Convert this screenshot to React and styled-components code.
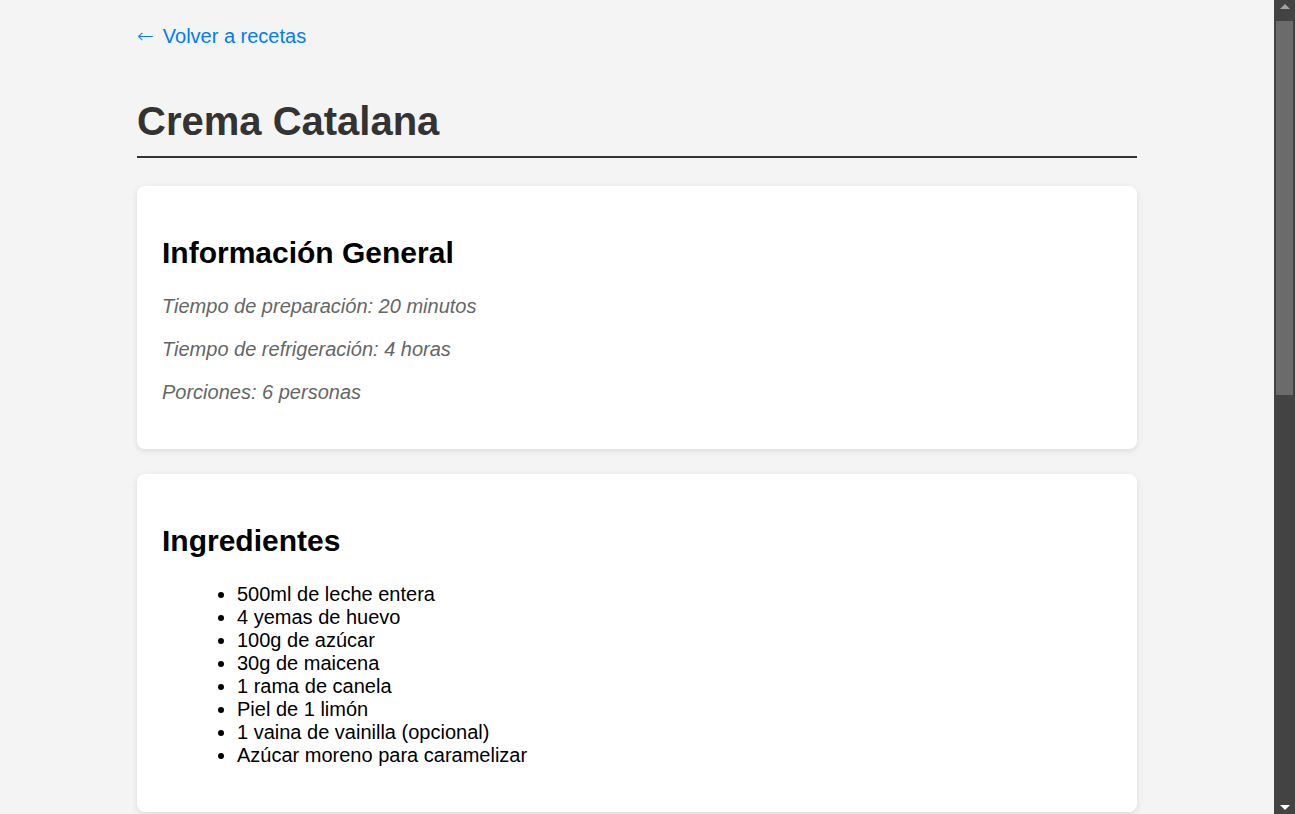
import React from 'react'
import styled, { createGlobalStyle } from 'styled-components'

const GlobalStyle = createGlobalStyle`
    html, body {
        margin: 0;
        padding: 0;
        background: #f4f4f4;
    }

    body {
        font-family: "Liberation Sans", Arial, sans-serif;
        font-size: 20px;
        color: #000;
    }
`;

// content column keeps room for the scrollbar on the right
const Viewport = styled.div`
    padding-right: 21px;
`;

const Page = styled.div`
    max-width: 1000px;
    margin: 0 auto;
    padding: 25px 0;
`;

const ScrollTrack = styled.aside`
    position: fixed;
    top: 0;
    right: 0;
    bottom: 0;
    width: 21px;
    background: #434343;
    display: flex;
    flex-direction: column;
    align-items: center;
`;

const ScrollArrow = styled.div`
    height: 17px;
    width: 100%;
    display: flex;
    align-items: center;
    justify-content: center;

    &::before {
        content: '';
        border-left: 5px solid transparent;
        border-right: 5px solid transparent;
        ${(p) => p.$down
            ? 'border-top: 5px solid #fff; margin-top: 4px;'
            : 'border-bottom: 5px solid #a3a3a3; margin-top: -5px;'}
    }
`;

const ScrollSpace = styled.div`
    flex: 1;
    width: 100%;
    padding: 4px 2px 0 2px;
    box-sizing: border-box;
`;

const ScrollThumb = styled.div`
    height: 374px;
    background: #6b6b6b;
`;

const BackBar = styled.div`
    margin-bottom: 51px;
`;

const BackLink = styled.a`
    color: #007bff;
    text-decoration: none;
    line-height: 23px;
`;

const Arrow = styled.span`
    font-family: "DejaVu Sans", sans-serif;
    font-weight: 300;
    margin-right: 9px;
`;

const Title = styled.h1`
    font-size: 40px;
    font-weight: bold;
    color: #333;
    margin: 0 0 28px;
    padding-bottom: 12px;
    border-bottom: 2px solid #333;
`;

const Card = styled.section`
    background: #fff;
    border-radius: 8px;
    box-shadow: 0 2px 6px rgba(0, 0, 0, 0.1);
    padding: 25px;
    margin-bottom: 25px;

    &:last-child {
        margin-bottom: 0;
    }
`;

const CardTitle = styled.h2`
    font-size: 30px;
    font-weight: bold;
    margin: 25px 0;
`;

const Info = styled.p`
    font-style: italic;
    color: #666;
    margin: 20px 0;
`;

const List = styled.ul`
    margin: 20px 0;
    padding-left: 75px;
`;

const Steps = styled.ol`
    margin: 20px 0;
    padding-left: 75px;
`;

const info = [
    'Tiempo de preparación: 20 minutos',
    'Tiempo de refrigeración: 4 horas',
    'Porciones: 6 personas',
];

const ingredientes = [
    '500ml de leche entera',
    '4 yemas de huevo',
    '100g de azúcar',
    '30g de maicena',
    '1 rama de canela',
    'Piel de 1 limón',
    '1 vaina de vainilla (opcional)',
    'Azúcar moreno para caramelizar',
];

const pasos = [
    'Calentar la leche con la rama de canela y la piel de limón.',
    'Si se usa vainilla, abrir la vaina y añadirla a la leche.',
    'Llevar a ebullición y retirar del fuego.',
    'Dejar infusionar durante 15 minutos.',
    'Colar la leche para retirar la canela, el limón y la vainilla.',
    'En un bol, batir las yemas con el azúcar hasta blanquear.',
    'Disolver la maicena en un poco de leche fría.',
    'Añadir la maicena disuelta a las yemas y mezclar bien.',
    'Verter la leche caliente poco a poco sobre la mezcla, sin dejar de remover.',
    'Volver a poner todo al fuego medio, removiendo constantemente.',
    'Cocinar hasta que espese, sin que llegue a hervir.',
    'Repartir la crema en cazuelitas de barro individuales.',
    'Dejar enfriar y refrigerar al menos 4 horas.',
];

const consejos = [
    'Espolvorear azúcar moreno justo antes de servir.',
    'Caramelizar con un soplete o una pala de hierro caliente.',
    'No dejar de remover para evitar grumos.',
    'Usar leche entera para una textura más cremosa.',
    'La crema se puede preparar con un día de antelación.',
    'No caramelizar hasta el momento de servir.',
    'Se puede aromatizar con un poco de anís.',
    'Servir frío, con la capa de caramelo crujiente.',
];

const App = () => {
    return (
        <>
            <GlobalStyle />
            <Viewport>
                <Page>
                    <BackBar>
                        <BackLink href="#"><Arrow>←</Arrow>Volver a recetas</BackLink>
                    </BackBar>
                    <Title>Crema Catalana</Title>

                    <Card>
                        <CardTitle>Información General</CardTitle>
                        {info.map((item) => (
                            <Info key={item}>{item}</Info>
                        ))}
                    </Card>

                    <Card>
                        <CardTitle>Ingredientes</CardTitle>
                        <List>
                            {ingredientes.map((item) => (
                                <li key={item}>{item}</li>
                            ))}
                        </List>
                    </Card>

                    <Card>
                        <CardTitle>Preparación</CardTitle>
                        <Steps>
                            {pasos.map((item) => (
                                <li key={item}>{item}</li>
                            ))}
                        </Steps>
                    </Card>

                    <Card>
                        <CardTitle>Consejos</CardTitle>
                        <List>
                            {consejos.map((item) => (
                                <li key={item}>{item}</li>
                            ))}
                        </List>
                    </Card>
                </Page>
            </Viewport>
            <ScrollTrack>
                <ScrollArrow />
                <ScrollSpace>
                    <ScrollThumb />
                </ScrollSpace>
                <ScrollArrow $down />
            </ScrollTrack>
        </>
    )
}

export default App
